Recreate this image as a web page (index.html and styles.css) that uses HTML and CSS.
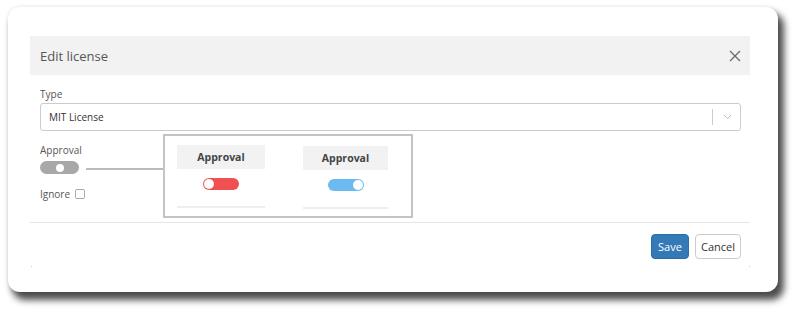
FILE: index.html
```html
<!DOCTYPE html>
<html lang="en">
<head>
    <meta charset="UTF-8">
    <meta name="viewport" content="width=device-width, initial-scale=1.0">
    <title>Edit license</title>
    <link rel="stylesheet" href="styles.css">
</head>
<body>
    <div class="card">
        <div class="modal">
            <div class="modal-header">
                <h1>Edit license</h1>
                <span class="close">
                    <svg width="12" height="12" viewBox="0 0 12 12"><path d="M1 1L11 11M11 1L1 11" stroke="#666" stroke-width="1.2" fill="none"/></svg>
                </span>
            </div>
            <div class="modal-body">
                <label class="lbl">Type</label>
                <div class="select">
                    <span>MIT License</span>
                    <span class="sel-sep"></span>
                    <svg class="chev" width="9" height="6" viewBox="0 0 9 6"><path d="M1 1L4.5 4.5L8 1" stroke="#bbb" stroke-width="1" fill="none"/></svg>
                </div>
                <label class="lbl lbl-approval">Approval</label>
                <span class="toggle toggle-grey"><i></i></span>
                <div class="ignore">Ignore <span class="check"></span></div>

                <!-- callout -->
                <span class="callout-line"></span>
                <div class="callout">
                    <div class="col">
                        <div class="col-head">Approval</div>
                        <div class="col-cell"><span class="toggle toggle-red"><i></i></span></div>
                    </div>
                    <div class="col">
                        <div class="col-head">Approval</div>
                        <div class="col-cell"><span class="toggle toggle-blue"><i></i></span></div>
                    </div>
                </div>
            </div>
            <div class="modal-footer">
                <button class="btn btn-primary">Save</button>
                <button class="btn">Cancel</button>
            </div>
            <div class="dots"><span></span><span></span></div>
        </div>
    </div>
</body>
</html>
```
FILE: styles.css
```css
*{margin:0; padding:0; box-sizing:border-box;}
html, body {height:100%;}
body {background:#fff; font-family:"Open Sans", "Noto Sans", sans-serif; color:#333; padding:7px 0 0 8px; min-height:314px;}

.card {
    width:770px; height:285px;
    background:#fff;
    border-radius:12px;
    box-shadow:5px 7px 7px 1px rgba(0,0,0,.7), 0 0 4px rgba(0,0,0,.1);
    padding:29px 0 0 22px;
}
.modal {width:720px; position:relative;}

.modal-header {
    height:39px; background:#f2f2f2;
    display:flex; align-items:center; justify-content:space-between;
    padding:0 9px 0 10px;
}
.modal-header h1 {font-size:13px; font-weight:400; color:#555;}
.close {display:flex; width:12px; height:12px;}

.modal-body {padding:12px 9px 0 10px; height:148px; position:relative; border-bottom:1px solid #e5e5e5;}
.lbl {display:block; font-size:10px; color:#555; line-height:14px;}
.select {
    margin-top:2px; height:28px;
    border:1px solid #ccc; border-radius:3px;
    display:flex; align-items:center;
    padding:0 8px 0 8px;
    font-size:10px; color:#333;
}
.select span:first-child {flex:1;}
.sel-sep {width:1px; height:16px; background:#ccc; margin-right:10px;}

.lbl-approval {margin-top:12px;}
.toggle {display:block; position:relative; border-radius:7px;}
.toggle i {position:absolute; background:#fff; border-radius:50%;}
.toggle-grey {width:39px; height:13px; background:#a8a8a8; margin-top:4px;}
.toggle-grey i {width:8px; height:8px; left:16px; top:2.5px;}
.toggle-red {width:36px; height:12px; background:#f05050;}
.toggle-red i {width:10px; height:10px; left:1px; top:1px;}
.toggle-blue {width:36px; height:12px; background:#6bbaf2;}
.toggle-blue i {width:10px; height:10px; right:1px; top:1px;}

.ignore {margin-top:13px; font-size:10px; color:#555; display:flex; align-items:center; gap:5px;}
.check {width:10px; height:10px; border:1px solid #aaa; border-radius:2px; display:inline-block;}

.callout-line {position:absolute; left:56px; top:93px; width:78px; height:2px; background:#bbb;}
.callout {
    position:absolute; left:133px; top:59px;
    width:250px; height:84px;
    background:#fff; border:2px solid #c4c4c4;
    display:flex; gap:38px;
    padding:9px 0 0 12px;
}
.col {width:88px; border-bottom:2px solid #eee; height:63px;}
.col:last-child {width:85px; margin-top:1px;}
.col-head {height:24px; background:#f2f2f2; font-size:10.5px; font-weight:700; color:#444; display:flex; align-items:center; justify-content:center;}
.col-cell {display:flex; justify-content:center; padding-top:9px;}

.modal-footer {display:flex; justify-content:flex-end; gap:6px; padding:11px 9px 0 0;}
.btn {
    font-family:inherit; font-size:11px;
    height:25px; border-radius:4px;
    border:1px solid #ccc; background:#fff; color:#333;
    padding:0 5px;
}
.btn-primary {background:#337ab7; border-color:#2e6da4; color:#fff; width:38px; padding:0;}
.dots {display:flex; justify-content:space-between; padding:7px 0 0 1px;}
.dots span {width:1px; height:1px; background:#ccc;}
```
